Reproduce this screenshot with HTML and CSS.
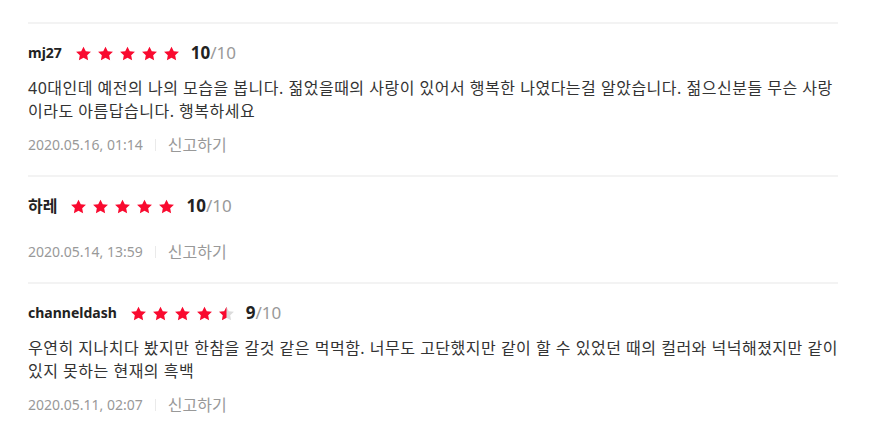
FILE: index.html
```html
<!DOCTYPE html>
<html lang="ko">
<head>
<meta charset="utf-8">
<title>Reviews</title>
<link rel="stylesheet" href="styles.css">
</head>
<body>
<svg width="0" height="0" class="defs" aria-hidden="true">
  <defs>
    <symbol id="star" viewBox="0 0 24 20">
      <path d="M12 0.4l3.2 6.3 7.3 0.9-5.3 4.7 1.3 7.1L12 16.1l-6.5 3.3 1.3-7.1L1.5 7.6l7.3-0.9z"/>
    </symbol>
    <clipPath id="half"><rect x="0" y="0" width="12" height="20"/></clipPath>
  </defs>
</svg>
<div class="list">
  <div class="review">
    <div class="head">
      <span class="name">mj27</span>
      <span class="stars">
        <svg class="star"><use href="#star"/></svg>
        <svg class="star"><use href="#star"/></svg>
        <svg class="star"><use href="#star"/></svg>
        <svg class="star"><use href="#star"/></svg>
        <svg class="star"><use href="#star"/></svg>
      </span>
      <span class="score"><b>10</b>/10</span>
    </div>
    <p class="text">40대인데 예전의 나의 모습을 봅니다. 젊었을때의 사랑이 있어서 행복한 나였다는걸 알았습니다. 젊으신분들 무슨 사랑이라도 아름답습니다. 행복하세요</p>
    <div class="meta"><span class="date">2020.05.16, 01:14</span><span class="report">신고하기</span></div>
  </div>
  <div class="review">
    <div class="head">
      <span class="name ko">하레</span>
      <span class="stars">
        <svg class="star"><use href="#star"/></svg>
        <svg class="star"><use href="#star"/></svg>
        <svg class="star"><use href="#star"/></svg>
        <svg class="star"><use href="#star"/></svg>
        <svg class="star"><use href="#star"/></svg>
      </span>
      <span class="score"><b>10</b>/10</span>
    </div>
    <p class="text"></p>
    <div class="meta"><span class="date">2020.05.14, 13:59</span><span class="report">신고하기</span></div>
  </div>
  <div class="review">
    <div class="head">
      <span class="name">channeldash</span>
      <span class="stars">
        <svg class="star"><use href="#star"/></svg>
        <svg class="star"><use href="#star"/></svg>
        <svg class="star"><use href="#star"/></svg>
        <svg class="star"><use href="#star"/></svg>
        <svg class="star off" viewBox="0 0 24 20"><use href="#star"/><g clip-path="url(#half)"><use href="#star" class="on"/></g></svg>
      </span>
      <span class="score"><b>9</b>/10</span>
    </div>
    <p class="text">우연히 지나치다 봤지만 한참을 갈것 같은 먹먹함. 너무도 고단했지만 같이 할 수 있었던 때의 컬러와 넉넉해졌지만 같이 있지 못하는 현재의 흑백</p>
    <div class="meta"><span class="date">2020.05.11, 02:07</span><span class="report">신고하기</span></div>
  </div>
</div>
</body>
</html>
```

FILE: styles.css
```css
html, body {
  margin: 0;
  padding: 0;
  background: #fff;
}
body {
  font-family: "Noto Sans", "Noto Sans CJK KR", sans-serif;
  color: #222;
}
.defs {
  position: absolute;
  width: 0;
  height: 0;
  overflow: hidden;
}
.list {
  margin: 0 33px 0 28px;
  padding-top: 22px;
}
.review {
  display: flex;
  flex-direction: column;
  border-top: 2px solid #f3f3f3;
  padding: 19px 0 20px;
}
.head {
  display: flex;
  align-items: center;
  height: 20px;
}
.name {
  font-size: 14px;
  font-weight: 700;
  color: #222;
  line-height: 20px;
}
.name.ko {
  font-size: 16px;
  font-weight: 600;
}
.stars {
  display: flex;
  gap: 5px;
  margin-left: 13px;
}
.star {
  width: 17px;
  height: 15px;
  fill: #f90a2f;
}
.star.off {
  fill: #dcdcdc;
}
.star .on {
  fill: #f90a2f;
}
.score {
  margin-left: 11px;
  font-size: 17px;
  line-height: 20px;
  color: #999;
}
.score b {
  color: #222;
  font-weight: 700;
}
.text {
  margin: 14px 0 0;
  font-size: 16px;
  letter-spacing: 0.5px;
  line-height: 23px;
  color: #333;
}
.meta {
  margin-top: 12px;
  display: flex;
  align-items: center;
  height: 20px;
  font-size: 14px;
  color: #999;
}
.date {
  padding-right: 12px;
  border-right: 1px solid #eaeaea;
  line-height: 12px;
}
.report {
  padding-left: 12px;
  font-size: 16px;
  line-height: 20px;
}
```
